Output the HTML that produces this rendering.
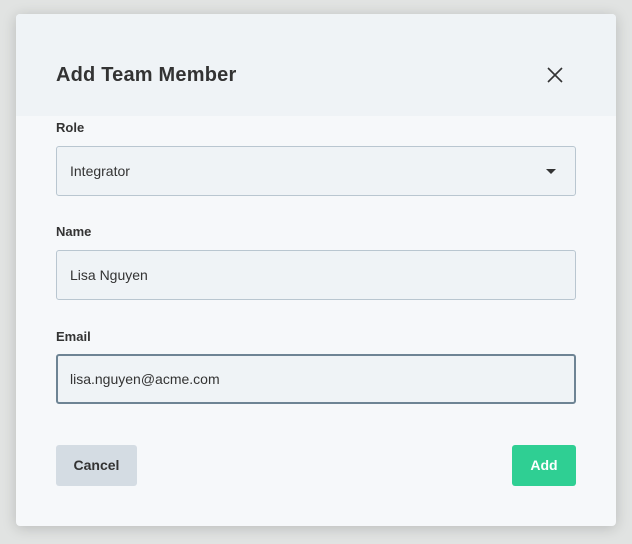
<!DOCTYPE html>
<html><head><style>
body{margin:0;width:632px;height:544px;background:#e1e3e2;font-family:"Liberation Sans",sans-serif;position:relative;overflow:hidden}
.m{position:absolute;left:16px;top:14px;width:600px;height:512px;background:#f6f8fa;border-radius:4px;box-shadow:0 2px 14px rgba(0,0,0,.18);overflow:hidden}
.h{position:absolute;left:0;top:0;width:600px;height:102px;background:#eff3f6}
.t{position:absolute;left:40px;top:50px;font-size:20px;font-weight:bold;color:#333;letter-spacing:0.2px}
.l{position:absolute;left:40px;font-size:13px;font-weight:bold;color:#333}
.i{position:absolute;left:40px;width:518px;height:48px;border:1px solid #b9c6d0;border-radius:3px;background:#eff3f6;box-sizing:content-box}
.i span{position:absolute;left:13px;top:16px;font-size:14px;color:#333}
.b{position:absolute;top:431px;height:41px;border-radius:3px;font-size:14px;font-weight:bold;line-height:41px;text-align:center}
</style></head><body>
<div class="m">
<div class="h"></div>
<div class="t">Add Team Member</div>
<svg style="position:absolute;left:531px;top:53px" width="16" height="16" viewBox="0 0 16 16"><path d="M1 1L15 15M15 1L1 15" stroke="#333" stroke-width="1.6"/></svg>
<div class="l" style="top:106px">Role</div>
<div class="i" style="top:132px"><span>Integrator</span><svg style="position:absolute;left:489px;top:22px" width="10" height="6"><path d="M0 0H10L5 5Z" fill="#333"/></svg></div>
<div class="l" style="top:210px">Name</div>
<div class="i" style="top:236px"><span>Lisa Nguyen</span></div>
<div class="l" style="top:315px">Email</div>
<div class="i" style="top:340px;border:2px solid #6e8494;width:516px;height:46px"><span style="left:12px;top:15px">lisa.nguyen@acme.com</span></div>
<div class="b" style="left:40px;width:81px;background:#d4dce3;color:#333">Cancel</div>
<div class="b" style="left:496px;width:64px;background:#2fcf93;color:#fff">Add</div>
</div>
</body></html>
